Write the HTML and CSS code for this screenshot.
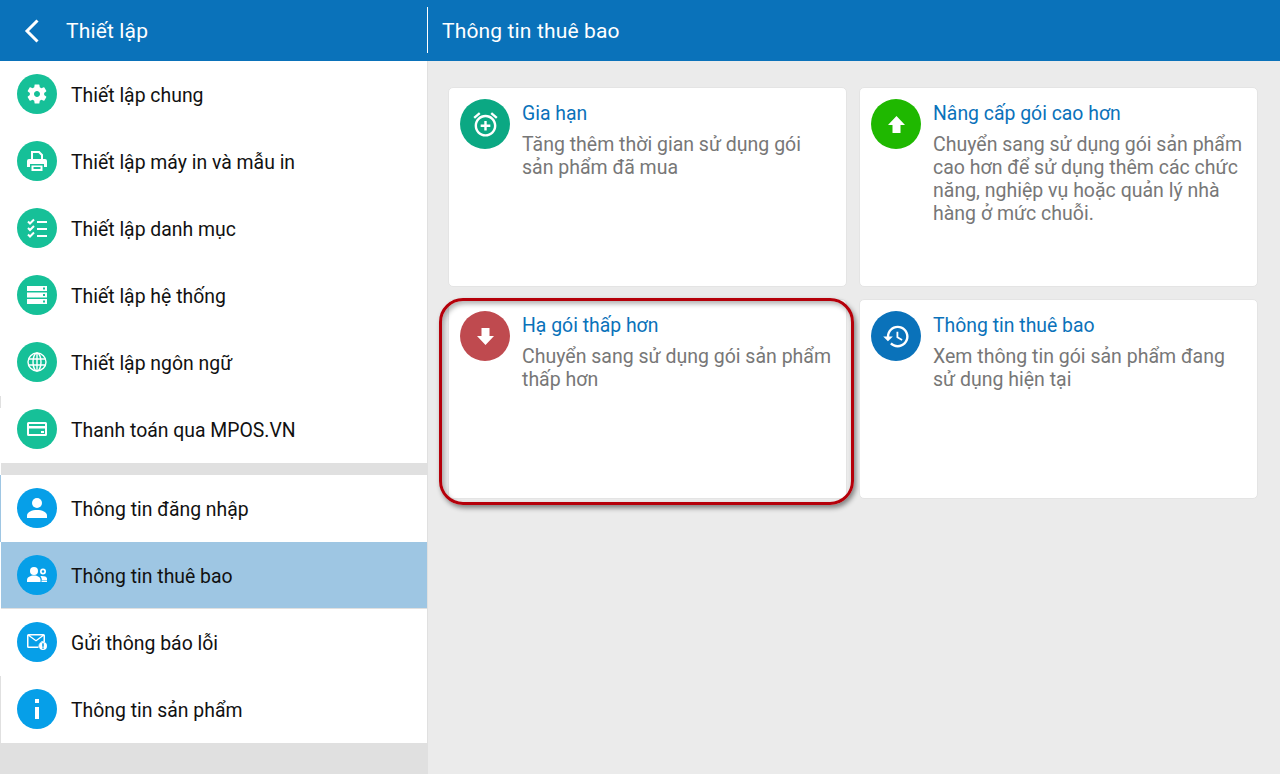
FILE: index.html
```html
<!DOCTYPE html>
<html lang="vi">
<head>
<meta charset="utf-8">
<title>Thiết lập</title>
<link rel="stylesheet" href="styles.css">
</head>
<body>
<div class="app">
  <header class="topbar">
    <div class="topbar-left">
      <svg class="back" viewBox="0 0 16 24"><path d="M13.500 1.500 3 12l10.500 10.500"/></svg>
      <span class="topbar-title">Thiết lập</span>
    </div>
    <div class="topbar-right"><span class="topbar-title">Thông tin thuê bao</span></div>
  </header>
  <div class="body">
    <aside class="sidebar">
      <nav class="group">
        <a class="row"><span class="dot teal"><svg viewBox="2 2 20 20"><path d="M19.140 12.940c.04-.3.06-.61.06-.94 0-.32-.02-.64-.07-.94l2.030-1.580a.49.49 0 0 0 .12-.61l-1.920-3.320a.488.488 0 0 0-.59-.22l-2.390.96c-.5-.38-1.030-.7-1.620-.94l-.36-2.540a.484.484 0 0 0-.48-.41h-3.840c-.24 0-.43.17-.47.41l-.36 2.540c-.59.24-1.130.57-1.620.94l-2.390-.96c-.22-.08-.47 0-.59.22L2.740 8.870c-.12.21-.08.47.12.61l2.030 1.580c-.05.3-.09.63-.09.94s.02.64.07.94l-2.030 1.580a.49.49 0 0 0-.12.61l1.920 3.320c.12.22.37.29.59.22l2.390-.96c.5.38 1.030.7 1.620.94l.36 2.54c.05.24.24.41.48.41h3.840c.24 0 .44-.17.47-.41l.36-2.540c.59-.24 1.130-.56 1.620-.94l2.390.96c.22.08.47 0 .59-.22l1.920-3.320c.12-.22.07-.47-.12-.61l-2.010-1.580zM12 15c-1.650 0-3-1.350-3-3s1.350-3 3-3 3 1.350 3 3-1.350 3-3 3z"/></svg></span>Thiết lập chung</a>
        <a class="row"><span class="dot teal"><svg viewBox="0 0 20 20"><path d="M4 8V0h8.500L16 3.500V8h-2V4.500L11.500 2H6v6z"/><path d="M2 8h16a2 2 0 0 1 2 2v6h-3v-3H3v3H0v-6a2 2 0 0 1 2-2z"/><path d="M4.500 14.500h11V20h-11zm2 1.500v2h7v-2z" fill-rule="evenodd"/></svg></span>Thiết lập máy in và mẫu in</a>
        <a class="row"><span class="dot teal"><svg viewBox="0 0 20 20"><path class="line" d="M1 3.500 3 5.500 7 1.500M1 10 3 12 7 8M1 16.500 3 18.500 7 14.500"/><path d="M10 3h10v2H10zM10 10h10v2H10zM10 17h10v2H10z"/></svg></span>Thiết lập danh mục</a>
        <a class="row"><span class="dot teal"><svg viewBox="0 0 20 20"><path fill-rule="evenodd" d="M0 1h20v5H0zm16 1.500v2h2v-2zM0 7.500h20v5H0zM16 9v2h2V9zM0 14h20v5H0zm16 1.500v2h2v-2z"/></svg></span>Thiết lập hệ thống</a>
        <a class="row"><span class="dot teal"><svg viewBox="0 0 20 20"><g class="line thin"><circle cx="10" cy="10" r="9"/><ellipse cx="10" cy="10" rx="4" ry="9"/><path d="M1.500 7h17M1.500 13h17M10 1v18"/></g></svg></span>Thiết lập ngôn ngữ</a>
        <a class="row tick"><span class="dot teal"><svg viewBox="0 0 20 20"><path fill-rule="evenodd" d="M1.500 3h17A1.500 1.500 0 0 1 20 4.500v11a1.500 1.500 0 0 1-1.500 1.500h-17A1.500 1.500 0 0 1 0 15.500v-11A1.500 1.500 0 0 1 1.500 3zM2 5v2h16V5zM2 9.500V15h16V9.500zM14 12h3v2h-3z"/></svg></span>Thanh toán qua MPOS.VN</a>
      </nav>
      <div class="gap"></div>
      <nav class="group">
        <a class="row edge-blue"><span class="dot sky"><svg viewBox="0 0 20 20"><circle cx="10" cy="5" r="5"/><path d="M0 20v-2.500C0 14 5 12 10 12s10 2 10 5.500V20z"/></svg></span>Thông tin đăng nhập</a>
        <a class="row selected"><span class="dot sky"><svg viewBox="0 0 20 20"><circle cx="7" cy="6" r="4"/><path d="M0 17v-2c0-3 3.500-4.500 7-4.500s6.500 1.500 6.500 4.500v2z"/><path fill-rule="evenodd" d="M16 3.500a3 3 0 1 1 0 6 3 3 0 0 1 0-6zm0 1.700a1.300 1.300 0 1 0 0 2.600 1.300 1.300 0 0 0 0-2.600zM14.500 11c3 0 5.500.8 5.500 2.500V15h-5.200c0-1.500-.5-3-1.500-3.800z"/><path d="M14.500 15.500H20V17h-5.500z"/></svg></span>Thông tin thuê bao</a>
        <a class="row"><span class="dot sky"><svg viewBox="0 0 20 20"><path fill-rule="evenodd" d="M1.500 2h15A1.500 1.500 0 0 1 18 3.500V10a5 5 0 0 0-6.500 6h-10A1.500 1.500 0 0 1 0 14.500v-11A1.500 1.500 0 0 1 1.500 2zm0 2v10.500h9.500c.5-3 3-5.500 5.500-5.800V4L9 9.500zm1.500-.5L9 8l6-4.500z"/><path fill-rule="evenodd" d="M16 10a4 4 0 1 1 0 8 4 4 0 0 1 0-8zm-.8 1.200v3.600h1.600v-3.600zm0 4.300v1.300h1.600v-1.300z"/></svg></span>Gửi thông báo lỗi</a>
        <a class="row edge-grey"><span class="dot sky"><svg viewBox="0 0 20 20"><path d="M8 0h4v4H8zM8 8h4v12H8z"/></svg></span>Thông tin sản phẩm</a>
      </nav>
    </aside>
    <main class="main">
      <section class="card">
        <span class="badge renew"><svg class="big" viewBox="0 0 24 24"><path d="M7.880 3.390 6.600 1.860 2 5.710l1.290 1.530 4.590-3.850zM22 5.720l-4.600-3.860-1.290 1.530 4.600 3.860L22 5.720zM12 4c-4.970 0-9 4.030-9 9s4.020 9 9 9c4.970 0 9-4.030 9-9s-4.030-9-9-9zm0 16c-3.870 0-7-3.130-7-7s3.130-7 7-7 7 3.130 7 7-3.130 7-7 7zm1-11h-2v3H8v2h3v3h2v-3h3v-2h-3V9z"/></svg></span>
        <div class="card-text">
          <h2>Gia hạn</h2>
          <p>Tăng thêm thời gian sử dụng gói sản phẩm đã mua</p>
        </div>
      </section>
      <section class="card">
        <span class="badge up"><svg class="arrow" viewBox="0 0 17 17"><path d="M8.500 0 17 9h-4.500v8h-8V9H0z"/></svg></span>
        <div class="card-text">
          <h2>Nâng cấp gói cao hơn</h2>
          <p>Chuyển sang sử dụng gói sản phẩm cao hơn để sử dụng thêm các chức năng, nghiệp vụ hoặc quản lý nhà hàng ở mức chuỗi.</p>
        </div>
      </section>
      <section class="card callout">
        <span class="badge down"><svg class="arrow" viewBox="0 0 17 17"><path d="M4.500 0h8v8H17l-8.500 9L0 8h4.500z"/></svg></span>
        <div class="card-text">
          <h2>Hạ gói thấp hơn</h2>
          <p>Chuyển sang sử dụng gói sản phẩm thấp hơn</p>
        </div>
        <div class="ring"></div>
      </section>
      <section class="card">
        <span class="badge history"><svg class="big" viewBox="0 0 24 24"><path d="M13 3c-4.970 0-9 4.030-9 9H1l3.890 3.890.07.14L9 12H6c0-3.870 3.130-7 7-7s7 3.130 7 7-3.130 7-7 7c-1.930 0-3.680-.79-4.940-2.060l-1.420 1.420C8.270 19.990 10.510 21 13 21c4.970 0 9-4.030 9-9s-4.030-9-9-9zm-1 5v5l4.280 2.540.72-1.210-3.500-2.080V8H12z"/></svg></span>
        <div class="card-text">
          <h2>Thông tin thuê bao</h2>
          <p>Xem thông tin gói sản phẩm đang sử dụng hiện tại</p>
        </div>
      </section>
    </main>
  </div>
</div>
</body>
</html>
```
FILE: styles.css
```css
* { box-sizing: border-box; }
html, body { margin: 0; height: 100%; overflow: hidden; }
body { font-family: Roboto, "Noto Sans", sans-serif; }
.app { width: 1280px; height: 774px; display: flex; flex-direction: column; }

.topbar { height: 61px; background: #0a72ba; color: #fff; display: flex; flex: none; }
.topbar-left { width: 427px; display: flex; align-items: center; padding-left: 24px; }
.topbar-right { flex: 1; margin: 7px 0 8px; border-left: 1px solid #fff; display: flex; align-items: center; padding: 1px 0 0 14px; }
.topbar-title { font-size: 21px; letter-spacing: 0.15px; }
.back { width: 16px; height: 24px; margin-right: 26px; fill: none; stroke: #fff; stroke-width: 3; }

.body { flex: 1; display: flex; min-height: 0; }
.sidebar { width: 428px; background: #e0e0e0; border-right: 1px solid #e0e0e0; flex: none; }
.gap { height: 12px; border-left: 1px solid #fff; }
.row { position: relative; height: 67px; background: #fff; border-left: 1px solid #fff; display: flex; align-items: center; padding: 2px 0 0 16px; font-size: 19.4px; color: #111; gap: 14px; }
.row.selected { background: #9ec6e3; box-shadow: inset 0 -1px #e0e0e0; }
.row.edge-blue { border-left-color: #9ec6e3; }
.row.edge-grey { border-left-color: #e0e0e0; }
.row.tick::before { content: ""; position: absolute; left: -1px; top: 0; width: 1px; height: 12px; background: #e0e0e0; }

.dot { width: 40px; height: 40px; margin-bottom: 3px; border-radius: 50%; display: flex; align-items: center; justify-content: center; flex: none; }
.dot svg { width: 20px; height: 20px; fill: #fff; display: block; }
.teal { background: #16c098; }
.sky { background: #069fe8; }
.line { fill: none; stroke: #fff; stroke-width: 2; }
.thin { stroke-width: 1.400; }

.main { flex: 1; background: #ebebeb; padding: 26px 22px 0 20px; display: grid; grid-template-columns: 399px 399px; grid-auto-rows: 200px; gap: 12px; align-content: start; }
.card { position: relative; background: #fff; border: 1px solid #e4e4e4; border-radius: 5px; padding: 11px; display: flex; gap: 12px; align-items: flex-start; }
.badge { width: 50px; height: 50px; border-radius: 50%; display: flex; align-items: center; justify-content: center; flex: none; }
.badge svg { fill: #fff; display: block; }
.big { width: 29px; height: 29px; }
.arrow { width: 17px; height: 17px; }
.renew { background: #0ba883; }
.up { background: #1fb800; }
.down { background: #bf4a4f; }
.history { background: #0a72ba; }
.card-text { min-width: 0; }
.card-text h2 { margin: 4px 0 9px; font-size: 19.4px; line-height: 21px; font-weight: 400; color: #0a72ba; }
.card-text p { margin: 0; font-size: 19.5px; line-height: 23px; color: #777; }

.ring { position: absolute; left: -10px; top: -2px; width: 415px; height: 207px; border: 3px solid #b5000a; border-radius: 24px; box-shadow: 2px 3px 5px rgba(0,0,0,.45), inset 2px 3px 5px rgba(0,0,0,.3); }
```
